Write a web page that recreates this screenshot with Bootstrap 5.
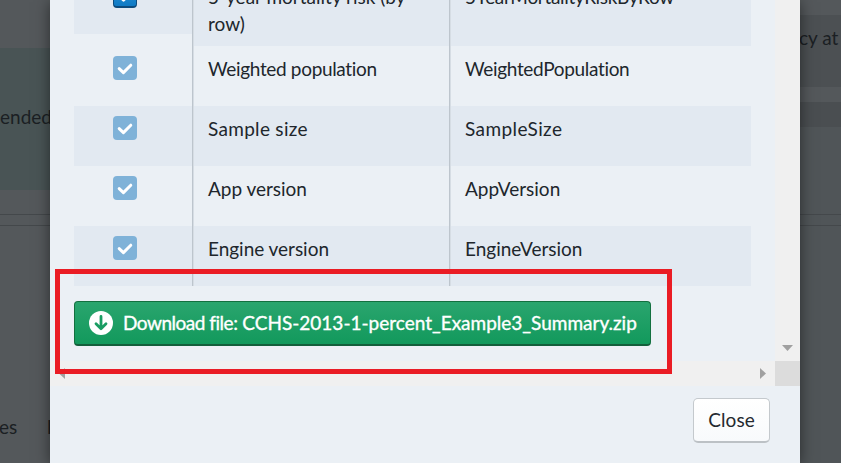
<!DOCTYPE html>
<html lang="en">
<head>
<meta charset="utf-8">
<meta name="viewport" content="width=device-width, initial-scale=1">
<title>Export summary</title>
<link href="https://cdn.jsdelivr.net/npm/bootstrap@5.3.0/dist/css/bootstrap.min.css" rel="stylesheet">
<style>
body{font-family:Lato,"Open Sans",sans-serif;font-variant-ligatures:none;font-size:19px;line-height:27px;color:#20262c;background:#525659;height:463px}
.page-left{width:50px;background:#54585b;color:#1b1f23}
.page-right{width:41px;background:#505558;color:#1b1f23}
.gap-top{height:48px}
.teal-band{height:142px;background:#495455;padding-bottom:5px;margin-right:-2px}
.gap-mid{height:24px}
.left-foot{padding-top:187px;margin-right:-2px;margin-left:-1px}
.band-light{height:15px;background:#54585b}
.band-text{height:72px;background:#4c5053;padding-top:9px}
.band-text span{margin-left:-1px}
.band-dark{height:25px;background:#4a4e51}
.gap-right{height:87px}
.dialog{width:750px;background:#ebf0f5;box-shadow:0 2px 14px rgba(0,0,0,.5);z-index:2}
.scroller{height:361px}
.viewport{width:725px;padding-left:24px}
.grid{width:677px;height:286px}
.checks{width:118px}
.c-cell{height:60px;padding-top:10px;padding-right:16px}
.c-cell.tall{height:72px;padding-top:22px}
.odd-cell{background:#e2e9f1}
.check{width:24px;height:24px;border-radius:4px;background:#7fb2d8}
.check.on{background:linear-gradient(#2b92d6,#0f7ac4);border:1px solid #0d4b7d;border-bottom-width:2px}
.check svg,.dl svg{display:block}
.t-row{min-height:60px}
.t-name{width:257px;padding:9px 20px 9px 15px;border-left:1px solid #bdc5cd;box-shadow:inset 1px 0 #d6dde4}
.t-col{width:302px;padding:9px 0 9px 15px;border-left:1px solid #bdc5cd;box-shadow:inset 1px 0 #d6dde4}
.a2,.b1,.b2{letter-spacing:-.33px}
.a3{letter-spacing:.3px}
.b3{letter-spacing:.4px}
.a4,.a5{letter-spacing:-.03px}
.dl{margin-top:15px;width:577px;height:45px;padding:0 14px;border:1px solid #13703f;border-bottom:2px solid #125f3b;border-radius:4px;background:linear-gradient(#2aa56e,#12995c);color:#fff;font-size:19px;gap:10px;-webkit-text-stroke:.35px #fff}
.dl:hover{color:#fff}
.dl-label{letter-spacing:-.48px}
.v-bar{width:25px;background:#f0f0f0;padding-bottom:10px}
.h-bar{height:25px;background:#f0f0f0}
.h-track{width:725px;padding:0 9px}
.corner{width:25px;background:#dcdcdc}
.close-btn{width:77px;height:45px;margin:12px 30px 0 0;background:linear-gradient(#fff,#f8fafc);border:1px solid #c4c9cd;border-bottom:2px solid #bcc1c5;border-radius:5px;font-size:19px;color:#24292f;letter-spacing:.1px}
.frame-mark{left:55px;top:269px;width:617px;height:105px;border:5px solid #ea1c24;z-index:3}
.rule-pair{height:12px;border-top:1px solid #44484b;border-bottom:1px solid #44484b}
</style>
<script src="https://cdn.jsdelivr.net/npm/bootstrap@5.3.0/dist/js/bootstrap.bundle.min.js"></script>
</head>
<body class="d-flex overflow-hidden position-relative">
<svg class="d-none"><symbol id="tick" viewBox="0 0 24 24"><path d="M6.200 12.600l4.200 4 7.400-7.400" fill="none" stroke="#fff" stroke-width="3" stroke-linecap="round" stroke-linejoin="round"/></symbol></svg>

<aside class="page-left flex-shrink-0 overflow-hidden text-nowrap">
  <div class="gap-top"></div>
  <div class="teal-band d-flex align-items-center justify-content-end"><span>mended</span></div>
  <div class="gap-mid"></div>
  <div class="rule-pair"></div>
  <div class="left-foot d-flex justify-content-between"><span>es</span><span>I</span></div>
</aside>

<main class="dialog flex-shrink-0 position-relative d-flex flex-column">
  <div class="scroller d-flex">
    <div class="viewport">
      <div class="grid d-flex align-items-end overflow-hidden">
        <div class="checks flex-shrink-0">
          <div class="c-cell odd-cell d-flex justify-content-center"><div class="check on"><svg width="22" height="22"><use href="#tick"/></svg></div></div>
          <div class="c-cell tall d-flex justify-content-center"><div class="check"><svg width="24" height="24"><use href="#tick"/></svg></div></div>
          <div class="c-cell odd-cell d-flex justify-content-center"><div class="check"><svg width="24" height="24"><use href="#tick"/></svg></div></div>
          <div class="c-cell d-flex justify-content-center"><div class="check"><svg width="24" height="24"><use href="#tick"/></svg></div></div>
          <div class="c-cell odd-cell d-flex justify-content-center"><div class="check"><svg width="24" height="24"><use href="#tick"/></svg></div></div>
        </div>
        <div class="flex-shrink-0">
          <div class="t-row odd-cell d-flex"><div class="t-name"><span>5-year mortality risk (by</span><br><span>row)</span></div><div class="t-col"><span class="b1">5YearMortalityRiskByRow</span></div></div>
          <div class="t-row d-flex"><div class="t-name"><span class="a2">Weighted population</span></div><div class="t-col"><span class="b2">WeightedPopulation</span></div></div>
          <div class="t-row odd-cell d-flex"><div class="t-name"><span class="a3">Sample size</span></div><div class="t-col"><span class="b3">SampleSize</span></div></div>
          <div class="t-row d-flex"><div class="t-name"><span class="a4">App version</span></div><div class="t-col"><span>AppVersion</span></div></div>
          <div class="t-row odd-cell d-flex"><div class="t-name"><span class="a5">Engine version</span></div><div class="t-col"><span>EngineVersion</span></div></div>
        </div>
      </div>
      <button class="dl btn d-flex align-items-center text-nowrap" type="button">
        <svg class="flex-shrink-0" width="24" height="24" viewBox="0 0 24 24"><circle cx="12" cy="12" r="12" fill="#fff"/><path d="M12 5.500v12M7 12.800l5 5 5-5" fill="none" stroke="#199c62" stroke-width="2.800" stroke-linecap="round" stroke-linejoin="round"/></svg>
        <span><span class="dl-label">Download file:</span> CCHS-2013-1-percent_Example3_Summary.zip</span>
      </button>
    </div>
    <div class="v-bar d-flex align-items-end justify-content-center"><svg width="11" height="6"><path d="M0 0h11L5.500 6z" fill="#a0a0a0"/></svg></div>
  </div>
  <div class="h-bar d-flex">
    <div class="h-track d-flex align-items-center justify-content-between"><svg width="6" height="11"><path d="M6 0v11L0 5.500z" fill="#a0a0a0"/></svg><svg width="6" height="11"><path d="M0 0v11L6 5.500z" fill="#a0a0a0"/></svg></div>
    <div class="corner"></div>
  </div>
  <div class="d-flex justify-content-end"><button class="close-btn btn p-0" type="button">Close</button></div>
</main>

<aside class="page-right flex-shrink-0 overflow-hidden text-nowrap">
  <div class="band-light"></div>
  <div class="band-text"><span>cy at</span></div>
  <div class="band-light"></div>
  <div class="band-dark"></div>
  <div class="gap-right"></div>
  <div class="rule-pair"></div>
</aside>
<div class="frame-mark position-absolute"></div>
</body>
</html>
